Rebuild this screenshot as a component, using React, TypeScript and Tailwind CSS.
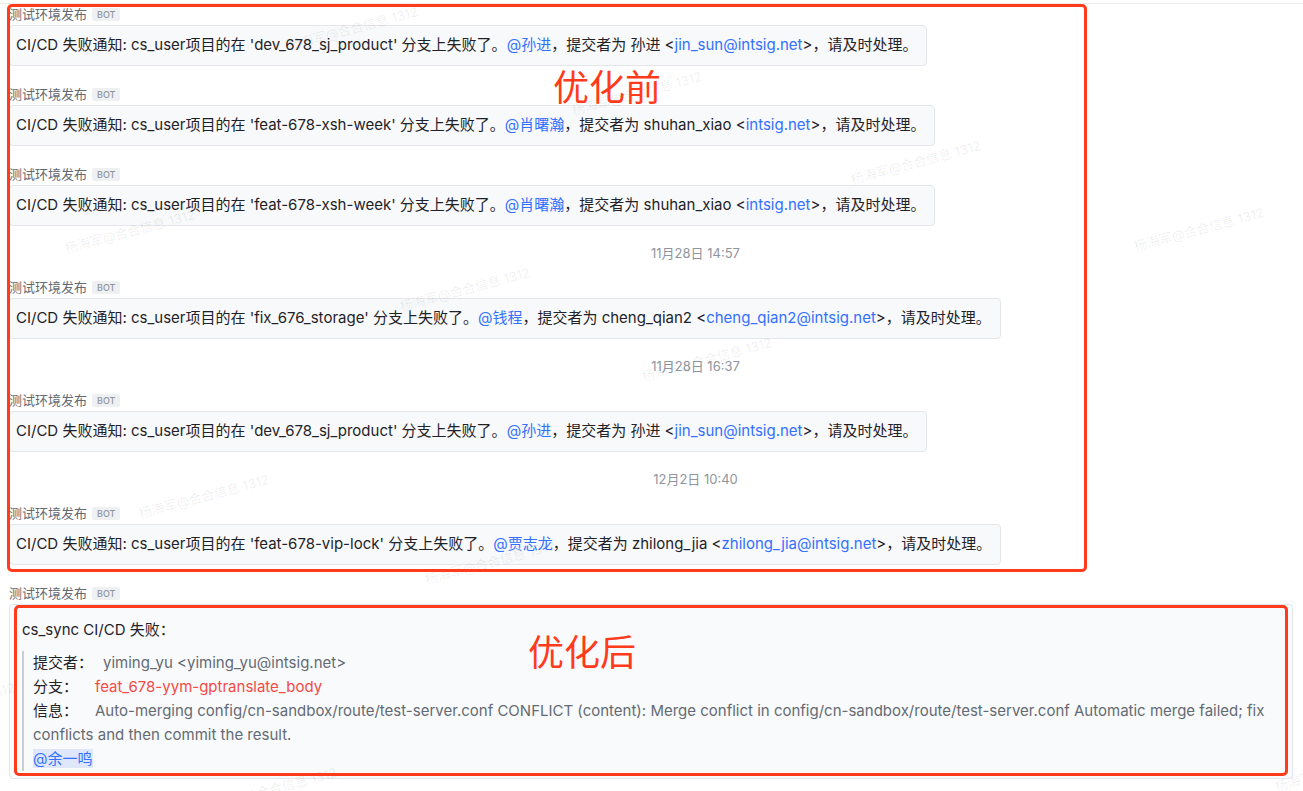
import React from 'react';

type Msg = {
  branch: string;
  mention: string;
  committer: string;
  email: string;
};

type Item = { ts: string } | Msg;

const items: Item[] = [
  { branch: 'dev_678_sj_product', mention: '孙进', committer: '孙进', email: 'jin_sun@intsig.net' },
  { branch: 'feat-678-xsh-week', mention: '肖曙瀚', committer: 'shuhan_xiao', email: 'intsig.net' },
  { branch: 'feat-678-xsh-week', mention: '肖曙瀚', committer: 'shuhan_xiao', email: 'intsig.net' },
  { ts: '11月28日 14:57' },
  { branch: 'fix_676_storage', mention: '钱程', committer: 'cheng_qian2', email: 'cheng_qian2@intsig.net' },
  { ts: '11月28日 16:37' },
  { branch: 'dev_678_sj_product', mention: '孙进', committer: '孙进', email: 'jin_sun@intsig.net' },
  { ts: '12月2日 10:40' },
  { branch: 'feat-678-vip-lock', mention: '贾志龙', committer: 'zhilong_jia', email: 'zhilong_jia@intsig.net' },
];

// watermark centres, read off the screenshot
const marks = [
  [353, 29],
  [637, 94],
  [916, 163],
  [1199, 230],
  [130, 232],
  [465, 290],
  [707, 360],
  [204, 497],
  [490, 563],
  [-50, 705],
  [272, 790],
  [1340, 770],
];

function Sender() {
  return (
    <div className="flex h-[21px] items-center gap-[5px]">
      <span className="text-[13px] leading-none text-[#646a73]">测试环境发布</span>
      <span className="rounded-[2px] bg-[#eff0f1] px-[5px] py-[2px] text-[9px] leading-[9px] font-medium text-[#8f959e]">
        BOT
      </span>
    </div>
  );
}

function Bubble({ m }: { m: Msg }) {
  return (
    <div className="mb-[18px]">
      <Sender />
      <div className="flex h-[41px] w-fit items-center rounded-[4px] border border-[#e4e6ea] bg-[#f8f9fa] pr-[9px] pl-[6px] text-[15px] text-[#1f2329]">
        <span>
          CI/CD 失败通知: cs_user项目的在 '{m.branch}' 分支上失败了。
          <span className="text-[#3370ff]">@{m.mention}</span>，提交者为 {m.committer} &lt;
          <span className="text-[#3370ff]">{m.email}</span>&gt;，请及时处理。
        </span>
      </div>
    </div>
  );
}

export default function App() {
  return (
    <div
      className="relative h-[791px] w-[1303px] overflow-hidden bg-white"
      style={{ fontFamily: 'Inter, "Noto Sans CJK SC", sans-serif' }}
    >
      <div className="h-[4px] border-b border-[#ebebeb]" />

      <div className="pl-[9px]">
        {items.map((it, i) =>
          'ts' in it ? (
            <div key={i} className="mb-[17px] -ml-[9px] pt-[2px] pl-[88px] text-center text-[13px] leading-[14px] text-[#8f959e]">
              {it.ts}
            </div>
          ) : (
            <Bubble key={i} m={it} />
          ),
        )}

        <Sender />
        <div className="mr-[10px] rounded-[4px] border border-[#e4e6ea] bg-[#f9fafb] px-[12px] pt-[14px] pb-[7px] text-[15px] text-[#1f2329]">
          <div className="leading-[22px]">cs_sync CI/CD 失败：</div>
          <div className="mt-[10px] border-l-[2px] border-[#c9cdd4] pl-[9px] leading-[24px]">
            <div>
              提交者：<span className="ml-[10px] text-[#646a73]">yiming_yu &lt;yiming_yu@intsig.net&gt;</span>
            </div>
            <div>
              分支：<span className="ml-[17px] text-[#f54a45]">feat_678-yym-gptranslate_body</span>
            </div>
            <div>
              信息：
              <span className="ml-[17px] text-[#646a73]">
                Auto-merging config/cn-sandbox/route/test-server.conf CONFLICT (content): Merge conflict in
                config/cn-sandbox/route/test-server.conf Automatic merge failed; fix
                <br />
                conflicts and then commit the result.
              </span>
            </div>
            <div>
              <span className="bg-[#dfe8fb] text-[#3370ff]">@余一鸣</span>
            </div>
          </div>
        </div>
      </div>

      {/* watermark layer */}
      {marks.map(([x, y], i) => (
        <div
          key={i}
          className="pointer-events-none absolute w-[150px] -translate-x-1/2 -translate-y-1/2 -rotate-[15deg] text-center text-[13px] whitespace-nowrap text-[rgba(0,0,0,0.075)]"
          style={{ left: x, top: y }}
        >
          杨海军@合合信息 1312
        </div>
      ))}

      {/* annotation overlay */}
      <div className="pointer-events-none absolute top-[4px] left-[7px] h-[568px] w-[1080px] rounded-[5px] border-[3px] border-[#ff3b1c]" />
      <div className="pointer-events-none absolute top-[605px] left-[14px] h-[171px] w-[1274px] rounded-[5px] border-[3px] border-[#ff3b1c]" />
      <div className="pointer-events-none absolute top-[66px] left-[553px] text-[36px] leading-[44px] text-[#ff3b1c]">优化前</div>
      <div className="pointer-events-none absolute top-[631px] left-[528px] text-[36px] leading-[44px] text-[#ff3b1c]">优化后</div>
    </div>
  );
}
